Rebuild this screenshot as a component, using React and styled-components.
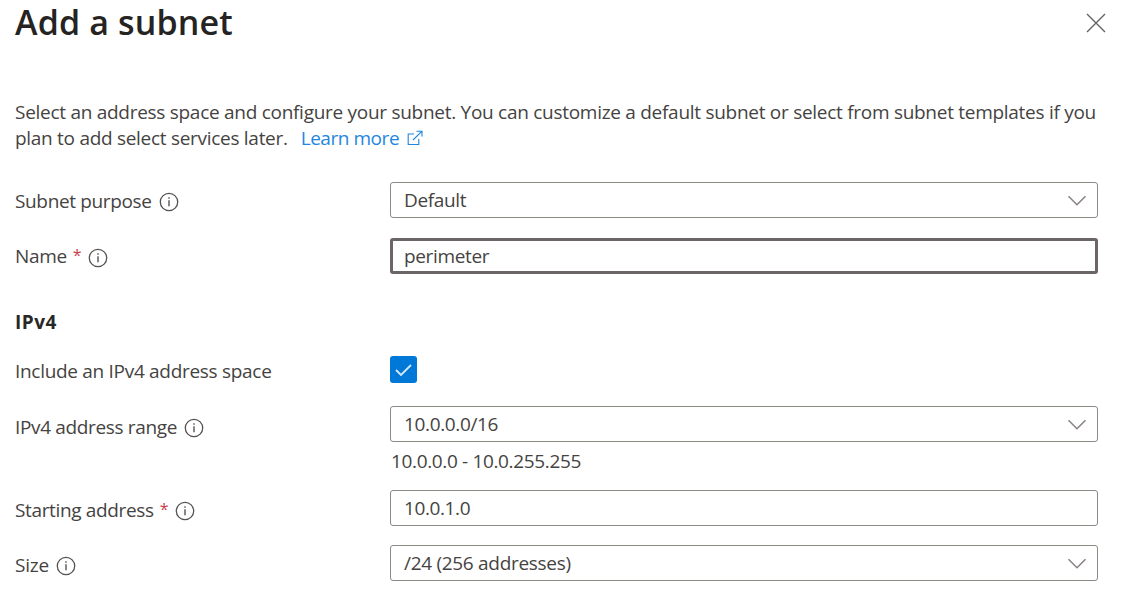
import React from "react";
import styled, { createGlobalStyle } from "styled-components";

const GlobalStyle = createGlobalStyle`
  * { box-sizing: border-box; }
  body {
    margin: 0;
    background: #fff;
    color: #454341;
    font-family: "Open Sans", "Noto Sans", sans-serif;
    font-size: 19px;
  }
`;

const Panel = styled.main`
  width: 1129px;
  height: 603px;
  padding: 0 31px 0 15px;
  overflow: hidden;
`;

const Header = styled.header`
  display: flex;
  justify-content: space-between;
  height: 99px;
`;

const Title = styled.h1`
  margin: 0;
  font-size: 34px;
  line-height: 45px;
  font-weight: 600;
  letter-spacing: 0.15px;
  color: #252423;
`;

const CloseButton = styled.button`
  width: 22px;
  height: 22px;
  margin: 12px -9px 0 0;
  padding: 0;
  border: 0;
  background: none;
  color: #666462;
`;

const Text = styled.span`
  letter-spacing: ${(p) => p.$spacing ?? -0.35}px;
  white-space: pre;
`;

const Intro = styled.div`
  height: 83px;
  line-height: 26px;
`;

const IntroLine = styled.div`
  display: flex;
  align-items: center;
  height: 26px;
`;

const Link = styled.a`
  display: flex;
  align-items: center;
  gap: 8px;
  margin-left: 13px;
  color: #1f86e0;
  text-decoration: none;
`;

const Row = styled.div`
  display: grid;
  grid-template-columns: 375px 708px;
  height: ${(p) => p.$height}px;
`;

const Label = styled.label`
  display: flex;
  align-items: center;
  height: 36px;
  padding-top: ${(p) => p.$drop || 0}px;
  line-height: 26px;
`;

const Required = styled.span`
  margin: -2px 0 0 6px;
  font-size: 16px;
  color: #c8414b;
`;

const InfoIcon = styled.svg`
  width: 20px;
  height: 20px;
  margin: ${(p) => p.$top || 0}px 0 0 7px;
  color: #555351;

  ${Required} + & {
    margin-left: 6px;
  }
`;

const Field = styled.div`
  display: flex;
  align-items: center;
  justify-content: space-between;
  height: 36px;
  margin-top: ${(p) => (p.$active ? -0.5 : 0)}px;
  padding: 0 10px 0 ${(p) => (p.$active ? 11 : 13)}px;
  border: ${(p) => (p.$active ? "3px solid #6b6665" : "1px solid #8b8a84")};
  border-radius: 3px;
  line-height: 26px;
`;

const Range = styled.div`
  padding: 6px 0 0 1px;
  line-height: 26px;
`;

const Section = styled.h2`
  height: 44px;
  margin: 0;
  font-size: 19px;
  line-height: 26px;
  font-weight: 700;
  color: #292827;
`;

const Checkbox = styled.div`
  display: flex;
  align-items: center;
  justify-content: center;
  width: 27px;
  height: 27px;
  margin-top: 3px;
  border-radius: 3px;
  background: #0078d7;
`;

const Info = ({ top }) => (
  <InfoIcon $top={top} viewBox="0 0 20 20" fill="none" stroke="currentColor">
    <circle cx="10" cy="10" r="8.7" strokeWidth="1.3" />
    <path d="M10 8.3v6" strokeWidth="1.4" />
    <path d="M10 5.2v1.6" strokeWidth="1.4" />
  </InfoIcon>
);

const Chevron = () => (
  <svg width="20" height="12" viewBox="0 0 20 12" fill="none" stroke="#8a8484" strokeWidth="1.6">
    <path d="M1.5 2.2L10 10.7l8.5-8.5" />
  </svg>
);

export default function App() {
  return (
    <>
      <GlobalStyle />
      <Panel>
        <Header>
          <Title>Add a subnet</Title>
          <CloseButton aria-label="Close">
            <svg width="22" height="22" viewBox="0 0 22 22" fill="none" stroke="currentColor" strokeWidth="1.4">
              <path d="M2 2l18 18M20 2L2 20" />
            </svg>
          </CloseButton>
        </Header>
        <Intro>
          <IntroLine>
            <Text $spacing={-0.28}>
              Select an address space and configure your subnet. You can customize a default subnet or select from subnet templates if you
            </Text>
          </IntroLine>
          <IntroLine>
            <Text $spacing={-0.29}>plan to add select services later.</Text>
            <Link>
              <Text $spacing={-0.45}>Learn more</Text>
              <svg width="16" height="16" viewBox="0 0 16 16" fill="none" stroke="currentColor" strokeWidth="1.1">
                <path d="M7 4H1.2v10.5H11.8V9M9.5 1.2H15v5.3M15 1.2L6 10" />
              </svg>
            </Link>
          </IntroLine>
        </Intro>
        <Row $height={56}>
          <Label $drop={1}>
            <Text>Subnet purpose</Text>
            <Info top={2} />
          </Label>
          <Field>
            <Text>Default</Text>
            <Chevron />
          </Field>
        </Row>
        <Row $height={71}>
          <Label>
            <Text>Name</Text>
            <Required>*</Required>
            <Info top={4} />
          </Label>
          <Field $active>
            <Text>perimeter</Text>
          </Field>
        </Row>
        <Section>
          <Text $spacing={0.5}>IPv4</Text>
        </Section>
        <Row $height={53}>
          <Label>
            <Text $spacing={-0.3}>Include an IPv4 address space</Text>
          </Label>
          <Checkbox>
            <svg width="19" height="14" viewBox="0 0 19 14" fill="none" stroke="#d5e9f9" strokeWidth="1.8">
              <path d="M2 7l5 5L17 2" />
            </svg>
          </Checkbox>
        </Row>
        <Row $height={84}>
          <Label $drop={6}>
            <Text>IPv4 address range</Text>
            <Info top={1} />
          </Label>
          <div>
            <Field>
              <Text>10.0.0.0/16</Text>
              <Chevron />
            </Field>
            <Range>
              <Text>10.0.0.0 - 10.0.255.255</Text>
            </Range>
          </div>
        </Row>
        <Row $height={55}>
          <Label $drop={3}>
            <Text>Starting address</Text>
            <Required>*</Required>
            <Info top={2} />
          </Label>
          <Field>
            <Text $spacing={-0.4}>10.0.1.0</Text>
          </Field>
        </Row>
        <Row $height={58}>
          <Label $drop={3}>
            <Text $spacing={-0.2}>Size</Text>
            <Info top={2} />
          </Label>
          <Field>
            <Text $spacing={-0.3}>/24 (256 addresses)</Text>
            <Chevron />
          </Field>
        </Row>
      </Panel>
    </>
  );
}
